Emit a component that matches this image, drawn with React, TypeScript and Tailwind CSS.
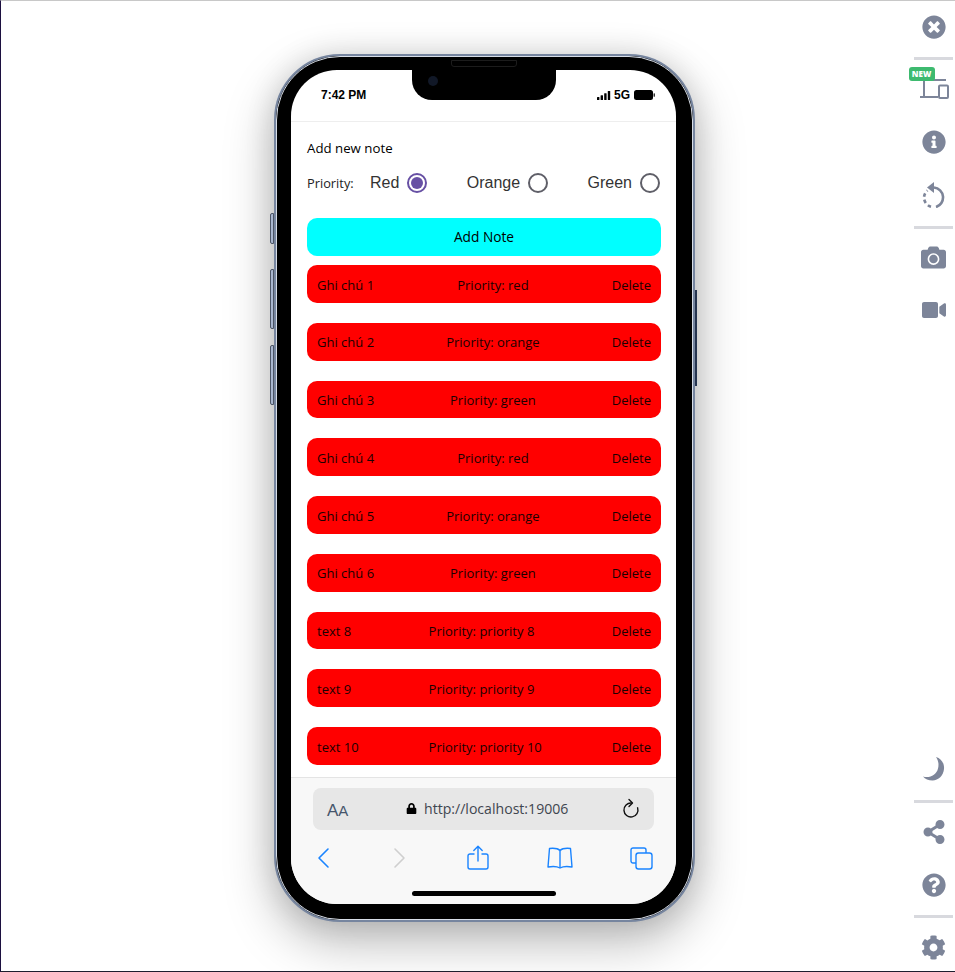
import { useState } from "react";
import {
  FaCamera,
  FaCog,
  FaInfoCircle,
  FaLock,
  FaQuestionCircle,
  FaShareAlt,
  FaTimesCircle,
  FaVideo,
} from "react-icons/fa";

const notes = [
  { text: "Ghi chú 1", priority: "red" },
  { text: "Ghi chú 2", priority: "orange" },
  { text: "Ghi chú 3", priority: "green" },
  { text: "Ghi chú 4", priority: "red" },
  { text: "Ghi chú 5", priority: "orange" },
  { text: "Ghi chú 6", priority: "green" },
  { text: "text 8", priority: "priority 8" },
  { text: "text 9", priority: "priority 9" },
  { text: "text 10", priority: "priority 10" },
];

function Radio({ label, checked, onClick }: { label: string; checked: boolean; onClick: () => void }) {
  return (
    <button onClick={onClick} className="flex items-center gap-[8px] font-['Liberation_Sans',sans-serif] text-[16px] text-[#333]">
      {label}
      <span
        className={`flex h-[20px] w-[20px] items-center justify-center rounded-full border-2 ${
          checked ? "border-[#6750a4]" : "border-[#5f5f68]"
        }`}
      >
        {checked && <span className="h-[12px] w-[12px] rounded-full bg-[#6750a4]" />}
      </span>
    </button>
  );
}

function NoteRow({ text, priority }: { text: string; priority: string }) {
  return (
    <div className="mb-[20px] flex h-[37.75px] shrink-0 items-center justify-between rounded-[10px] bg-[#ff0000] px-[10px] pt-[3px] text-[13px] text-[#1a0000]">
      <span>{text}</span>
      <span>Priority: {priority}</span>
      <span>Delete</span>
    </div>
  );
}

function StatusBar() {
  return (
    <div className="flex h-[52px] shrink-0 items-start justify-between border-b border-[#eeeeee] pl-[30px] pr-[21px] pt-[16px] font-['Liberation_Sans',sans-serif] text-[12px] font-bold text-black">
      <span>7:42 PM</span>
      <div className="flex items-center gap-[3px]">
        <svg width="14" height="9" viewBox="0 0 14 9" fill="black">
          <rect x="0" y="6" width="2.4" height="3" rx="0.5" />
          <rect x="3.6" y="4.2" width="2.4" height="4.8" rx="0.5" />
          <rect x="7.2" y="2.2" width="2.4" height="6.8" rx="0.5" />
          <rect x="10.8" y="0" width="2.4" height="9" rx="0.5" />
        </svg>
        <span>5G</span>
        <svg className="ml-[1px]" width="21" height="10" viewBox="0 0 21 10" fill="black">
          <rect x="0" y="0" width="19" height="10" rx="2.5" />
          <rect x="19.6" y="3.2" width="1.2" height="3.6" rx="0.6" />
        </svg>
      </div>
    </div>
  );
}

function BrowserBar() {
  const blue = "#1a84ff";
  return (
    <div className="flex h-[127px] shrink-0 flex-col border-t border-[#e4e4e4] bg-[#f8f8f8] px-[22px] pt-[10px]">
      <div className="flex h-[42px] items-center justify-between rounded-[8px] bg-[#e7e7e7] pl-[14px] pr-[14px]">
        <span className="pt-[3px] font-['Liberation_Sans',sans-serif] text-[#46556b]">
          <span className="text-[17px]">A</span>
          <span className="text-[15px]">A</span>
        </span>
        <div className="ml-[4px] flex items-center gap-[7px] text-[14.1px] text-[#3f4650]">
          <FaLock size={11} color="black" />
          <span>http://localhost:19006</span>
        </div>
        <svg width="18" height="22" viewBox="0 0 18 22" fill="none" stroke="#111" strokeWidth="1.4" strokeLinecap="round" strokeLinejoin="round">
          <path d="M9.5 5A7 7 0 1 0 15.6 9.8" />
          <path d="M7 1.500l3.500 3.500-3.500 3.500" />
        </svg>
      </div>
      <div className="mt-[15px] flex items-center pl-[4px]">
        <svg width="14" height="22" viewBox="0 0 14 22" fill="none" stroke={blue} strokeWidth="1.6" strokeLinecap="round" strokeLinejoin="round">
          <path d="M11 2L2 11l9 9" />
        </svg>
        <svg className="ml-[61px]" width="14" height="22" viewBox="0 0 14 22" fill="none" stroke="#cfcfcf" strokeWidth="1.6" strokeLinecap="round" strokeLinejoin="round">
          <path d="M3 2l9 9-9 9" />
        </svg>
        <svg className="ml-[61px]" width="22" height="26" viewBox="0 0 22 26" fill="none" stroke={blue} strokeWidth="1.4" strokeLinecap="round" strokeLinejoin="round">
          <path d="M7 9H3a2 2 0 0 0-2 2v11a2 2 0 0 0 2 2h16a2 2 0 0 0 2-2V11a2 2 0 0 0-2-2h-4" />
          <path d="M11 16V1.500M6.800 5.500L11 1.300l4.200 4.200" />
        </svg>
        <svg className="ml-[58px]" width="26" height="22" viewBox="0 0 26 22" fill="none" stroke={blue} strokeWidth="1.4" strokeLinejoin="round">
          <path d="M13 3.500C11 1.600 7 1 2.500 1.500L1 20c4-.7 9-.7 12 1 3-1.700 8-1.700 12-1L23.500 1.500C19 1 15 1.600 13 3.500z" />
          <path d="M13 3.500V21" />
        </svg>
        <svg className="ml-[57px]" width="23" height="23" viewBox="0 0 23 23" fill="none" stroke={blue} strokeWidth="1.4" strokeLinejoin="round">
          <path d="M6 16H3a2 2 0 0 1-2-2V3a2 2 0 0 1 2-2h11a2 2 0 0 1 2 2v3" />
          <rect x="6" y="6" width="16" height="16" rx="2.500" />
        </svg>
      </div>
      <div className="mb-[8px] mt-auto h-[5px] w-[144px] self-center rounded-full bg-black" />
    </div>
  );
}

function Phone() {
  const [priority, setPriority] = useState("Red");
  return (
    <div className="relative h-[868px] w-[421px] rounded-[66px] border-[2px] border-[#76859f] bg-black shadow-[0_20px_50px_rgba(0,0,0,0.28),0_0_30px_rgba(0,0,0,0.12)] outline outline-1 -outline-offset-[3px] outline-[#d8dee8]">
      {/* side buttons */}
      <div className="absolute -left-[6px] top-[157px] h-[31px] w-[4px] rounded-l-[2px] border border-[#4c5566] bg-[#a9b6cf]" />
      <div className="absolute -left-[6px] top-[213px] h-[60px] w-[4px] rounded-l-[2px] border border-[#4c5566] bg-[#a9b6cf]" />
      <div className="absolute -left-[6px] top-[289px] h-[60px] w-[4px] rounded-l-[2px] border border-[#4c5566] bg-[#a9b6cf]" />
      <div className="absolute -right-[4px] top-[234px] h-[96px] w-[2px] bg-[#26344f]" />

      {/* notch */}
      <div className="absolute left-[136px] top-[14px] z-10 h-[30px] w-[144px] rounded-b-[20px] bg-black">
        <div className="absolute left-[16px] top-[6px] h-[10px] w-[10px] rounded-full bg-[#111827]" />
      </div>
      <div className="absolute left-[175px] top-[4px] z-10 h-[7px] w-[66px] rounded-b-[3px] border border-[#1c1c1c] bg-black" />

      <div className="absolute bottom-[16px] left-[15px] right-[17px] top-[14px] flex flex-col overflow-hidden rounded-[46px] bg-white font-['Open_Sans',sans-serif]">
        <StatusBar />
        <div className="flex min-h-0 flex-1 flex-col overflow-hidden pl-[16px] pr-[15px] pt-[16px]">
          <p className="text-[13.25px] leading-[20px] text-black">Add new note</p>
          <div className="mt-[15px] flex h-[20px] items-center">
            <span className="w-[47px] pt-[1px] text-[12.8px] leading-none text-[#222]">Priority:</span>
            <div className="ml-[16px] mr-[1px] flex flex-1 items-center justify-between">
              <Radio label="Red" checked={priority === "Red"} onClick={() => setPriority("Red")} />
              <Radio label="Orange" checked={priority === "Orange"} onClick={() => setPriority("Orange")} />
              <Radio label="Green" checked={priority === "Green"} onClick={() => setPriority("Green")} />
            </div>
          </div>
          <button className="mb-[9px] mt-[25px] flex h-[38px] shrink-0 items-center justify-center rounded-[10px] bg-[#00ffff] text-[13.7px] text-black">
            Add Note
          </button>
          {notes.map((n) => (
            <NoteRow key={n.text} text={n.text} priority={n.priority} />
          ))}
        </div>
        <BrowserBar />
      </div>
    </div>
  );
}

function Divider() {
  return <div className="h-[3px] w-[39px] shrink-0 bg-[#d8d9de]" />;
}

function SideIcon({ children, box }: { children: React.ReactNode; box: string }) {
  return <div className={`flex w-[39px] shrink-0 items-center justify-center text-[#7d8599] ${box}`}>{children}</div>;
}

function Sidebar() {
  return (
    <aside className="flex h-full w-[41px] shrink-0 flex-col pr-[2px]">
      <SideIcon box="h-[56px] pb-[4px]">
        <FaTimesCircle size={24} />
      </SideIcon>
      <Divider />
      <SideIcon box="h-[56px]">
        <div className="relative">
          <svg width="30" height="21" viewBox="0 0 30 21" fill="none" stroke="currentColor" strokeWidth="2">
            <path d="M5 2H27M5 2V19M1 19H19" />
            <rect x="20" y="7.500" width="9" height="12.500" rx="1" />
          </svg>
          <span className="absolute -left-[10px] -top-[11px] w-[26px] rounded-[3px] bg-[#3dba6f] text-center font-['Open_Sans',sans-serif] text-[8px] font-extrabold leading-[14px] text-white">
            NEW
          </span>
        </div>
      </SideIcon>
      <SideIcon box="h-[52px]">
        <FaInfoCircle size={24} />
      </SideIcon>
      <SideIcon box="h-[58px] pb-[4px]">
        <svg width="24" height="26" viewBox="0 0 24 26" fill="none" stroke="currentColor" strokeWidth="2.600">
          <path d="M12 5.500a10 10 0 0 1 2 19.500" />
          <path d="M12 0L5 5.500l7 5.500z" fill="currentColor" stroke="none" />
          <path d="M9 24.800a10 10 0 0 1-7-9.300 10 10 0 0 1 3.500-7" strokeDasharray="3.500 3" />
        </svg>
      </SideIcon>
      <Divider />
      <SideIcon box="h-[58px] pb-[2px]">
        <FaCamera size={25} />
      </SideIcon>
      <SideIcon box="h-[46px]">
        <FaVideo size={24} />
      </SideIcon>
      <div className="flex-1" />
      <SideIcon box="h-[60px] pb-[2px]">
        <svg width="22" height="24" viewBox="0 0 22 24" fill="currentColor">
          <path d="M13 0c5.500 1.500 8.500 6.500 8 12-.5 6.500-5.500 11.500-11.500 11.500C5.500 23.500 2 22 0 19.500c6.500 2 13.500-1.500 15-8C16 7.500 15.500 3.500 13 0z" />
        </svg>
      </SideIcon>
      <Divider />
      <SideIcon box="h-[58px]">
        <FaShareAlt size={24} />
      </SideIcon>
      <SideIcon box="h-[54px] pb-[6px]">
        <FaQuestionCircle size={24} />
      </SideIcon>
      <Divider />
      <SideIcon box="h-[53px] pt-[5px]">
        <FaCog size={25} />
      </SideIcon>
    </aside>
  );
}

export default function App() {
  return (
    <div className="flex h-[972px] w-[955px] overflow-hidden border-b border-l border-t border-b-[#1e1e2e] border-l-[#1c1040] border-t-[#c8c8c8] bg-white">
      <main className="flex-1 pl-[273px] pt-[53px]">
        <Phone />
      </main>
      <Sidebar />
    </div>
  );
}
